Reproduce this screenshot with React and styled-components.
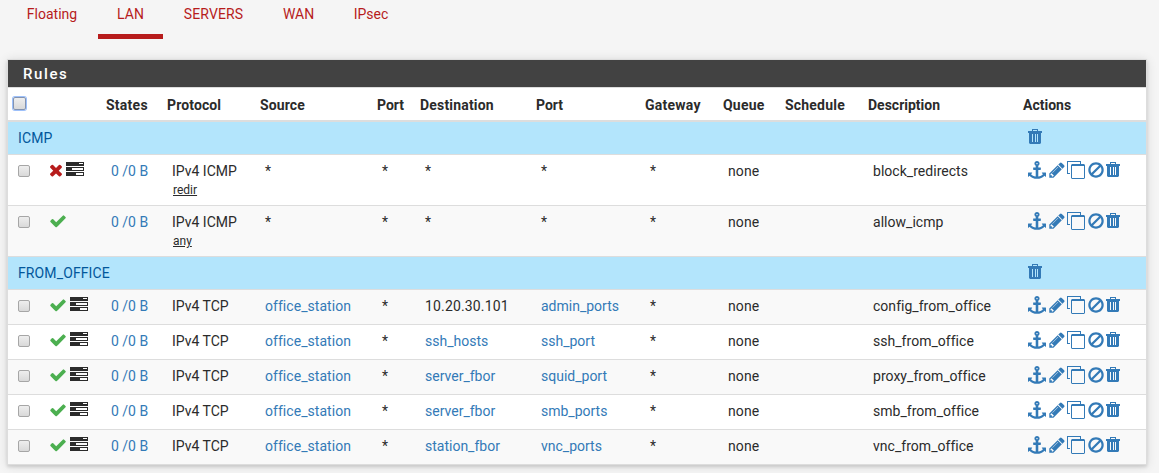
import React from "react";
import styled, { createGlobalStyle, css } from "styled-components";

const Global = createGlobalStyle`
  *, *::before, *::after { box-sizing: border-box; }
  body {
    margin: 0;
    background: #f5f5f5;
    color: #2b2b2b;
    font: 14px/20px Roboto, "Liberation Sans", sans-serif;
    overflow: hidden;
  }
`;

const Page = styled.main`
  height: 473px;
  padding: 0 12px 0 7px;
  overflow: hidden;
`;

const Tabs = styled.nav`
  display: flex;
  height: 39px;
  margin: 0 0 20px -1px;
`;

const Tab = styled.a`
  width: ${(p) => p.$width}px;
  padding-top: 4px;
  text-align: center;
  color: #b71c1c;
  border-bottom: 5px solid ${(p) => (p.$active ? "#b71c1c" : "transparent")};
  letter-spacing: ${(p) => p.$spacing || 0}px;
`;

const Panel = styled.section`
  border: 1px solid #ddd;
  border-bottom: 0;
  background: #fff;
  box-shadow: 0 1px 10px rgba(0, 0, 0, 0.12), 0 2px 3px rgba(0, 0, 0, 0.12);
`;

const PanelTitle = styled.h2`
  height: 28px;
  margin: 0;
  padding: 4px 15px 0;
  border-bottom: 1px solid #ddd;
  background: #424242;
  background-clip: padding-box;
  color: #fff;
  font-size: 15px;
  font-weight: 500;
  line-height: 20px;
  letter-spacing: 1.6px;
`;

const Table = styled.table`
  width: 1138px;
  table-layout: fixed;
  border-collapse: separate;
  border-spacing: 0;
`;

const Th = styled.th`
  height: 34px;
  padding: 1px 0 0 5px;
  border-bottom: 2px solid #ddd;
  text-align: left;
  vertical-align: middle;
  white-space: nowrap;
  font-weight: 700;
  letter-spacing: ${(p) => p.$spacing || 0}px;
`;

const cell = css`
  padding: 6px 0 0 10px;
  vertical-align: top;
  white-space: nowrap;
`;

const Td = styled.td`
  ${cell}
  height: ${(p) => (p.$tall ? 51 : 35)}px;
  border-bottom: 1px solid #ddd;
  background: ${(p) => (p.$shade ? "#f9f9f9" : "#fff")};
  color: ${(p) => (p.$link ? "#337ab7" : "inherit")};
  letter-spacing: ${(p) => p.$spacing || 0}px;
`;

const GroupTd = styled.td`
  ${cell}
  height: 33px;
  border-bottom: 1px solid #ddd;
  background: #b3e5fc;
  color: #01579b;
  letter-spacing: 0.12px;
`;

const Small = styled.span`
  display: block;
  margin: 0 0 0 1px;
  font-size: 12px;
  line-height: 18px;
  text-decoration: underline;
`;

const Check = styled.input.attrs({ type: "checkbox" })`
  appearance: none;
  display: block;
  width: 12px;
  height: 12px;
  margin: ${(p) => (p.$focus ? "-3px 0 0" : "4px 0 0")};
  border: 1px solid #a6a6a6;
  border-radius: 2px;
  background: linear-gradient(#eee, #d9d9d9);
  ${(p) => p.$focus && css`
    width: 13px;
    height: 13px;
    border-color: #8393b0;
    box-shadow: 0 0 0 1px #9dc0fa;
  `}
`;

const IconRow = styled.div`
  display: flex;
  height: 18px;
`;

const Glyph = styled.svg`
  flex: none;
  display: block;
  width: 18px;
  height: 18px;
  margin-left: ${(p) => p.$gap || 0}px;
  color: ${(p) => p.$tone || "#337ab7"};
  fill: currentColor;
`;

const PATHS = {
  check:
    "M1671 566q0 40-28 68l-724 724-136 136q-28 28-68 28t-68-28l-136-136-362-362q-28-28-28-68t28-68l136-136q28-28 68-28t68 28l294 295 656-657q28-28 68-28t68 28l136 136q28 28 28 68z",
  times:
    "M1490 1322q0 40-28 68l-136 136q-28 28-68 28t-68-28l-294-294-294 294q-28 28-68 28t-68-28l-136-136q-28-28-28-68t28-68l294-294-294-294q-28-28-28-68t28-68l136-136q28-28 68-28t68 28l294 294 294-294q28-28 68-28t68 28l136 136q28 28 28 68t-28 68l-294 294 294 294q28 28 28 68z",
  anchor:
    "M960 256q0-26-19-45t-45-19-45 19-19 45 19 45 45 19 45-19 19-45zm832 928v352q0 22-20 30-8 2-12 2-12 0-23-9l-93-93q-119 143-318.500 226.500t-429.500 83.500-429.500-83.500-318.500-226.500l-93 93q-9 9-23 9-4 0-12-2-20-8-20-30v-352q0-14 9-23t23-9h352q22 0 30 20 8 19-7 35l-100 100q67 91 189.500 153.500t271.500 82.500v-647h-192q-26 0-45-19t-19-45v-128q0-26 19-45t45-19h192v-163q-58-34-93-92.500t-35-128.500q0-106 75-181t181-75 181 75 75 181q0 70-35 128.500t-93 92.500v163h192q26 0 45 19t19 45v128q0 26-19 45t-45 19h-192v647q149-20 271.500-82.500t189.500-153.500l-100-100q-15-16-7-35 8-20 30-20h352q14 0 23 9t9 23z",
  pencil:
    "M491 1536l91-91-235-235-91 91v107h128v128h107zm523-928q0-22-22-22-10 0-17 7l-542 542q-7 7-7 17 0 22 22 22 10 0 17-7l542-542q7-7 7-17zm-54-192l416 416-832 832h-416v-416zm683 96q0 53-37 90l-166 166-416-416 166-165q36-38 90-38 53 0 91 38l235 234q37 39 37 91z",
  ban:
    "M1440 893q0-161-87-295l-754 753q137 89 297 89 111 0 211.500-43.500t173.500-116.500 116-174.500 43-212.500zm-999 299l755-754q-135-91-300-91-148 0-273 73t-198 199-73 274q0 162 89 299zm1223-299q0 157-61 300t-163.500 246-245 164-298.500 61-298.500-61-245-164-163.500-246-61-300 61-299.500 163.500-245.500 245-164 298.500-61 298.500 61 245 164 163.500 245.500 61 299.500z",
};

const Icon = ({ name, ...rest }) => (
  <Glyph viewBox="0 0 1792 1792" {...rest}>
    <path d={PATHS[name]} />
  </Glyph>
);

const TasksIcon = (props) => (
  <Glyph viewBox="0 0 18 18" shapeRendering="crispEdges" {...props}>
    <path
      fillRule="evenodd"
      d="M0 1h18v4H0zM13 2h4v1h-4zM0 6h18v4H0zM6 7h11v2H6zM0 11h18v4H0zM10 12h7v2h-7z"
    />
  </Glyph>
);

const CloneIcon = (props) => (
  <Glyph viewBox="0 0 18 18" {...props}>
    <path d="M0 0h14v3h-1V1H1v11h2v1H1V13H0z" />
    <path fillRule="evenodd" d="M5 3h12l1 1v13l-1 1H5l-1-1V4zM5 5v12h12V5z" />
  </Glyph>
);

const TrashIcon = (props) => (
  <Glyph viewBox="0 0 18 18" {...props}>
    <path
      fillRule="evenodd"
      d="M6 1h6v2h4v2h-1v10l-1 1H4l-1-1V5H2V3h4zM7 2v1h4V2zM6 6v8h1V6zM9 6v8h1V6zM11 6v8h1V6z"
    />
  </Glyph>
);

const COLUMNS = [
  ["", 32], ["", 61], ["States", 61, 0.25], ["Protocol", 93, 0.12], ["Source", 117, 0.1],
  ["Port", 43], ["Destination", 116, 0.18], ["Port", 109], ["Gateway", 78, 0.25],
  ["Queue", 62, 0.2], ["Schedule", 83, 0.2], ["Description", 155], ["Actions", 128],
];

const tcp = (dest, port, description, extra) => ({
  protocol: "IPv4 TCP", source: "office_station", dest, port, description,
  tasks: true, destLink: true, ...extra,
});

const GROUPS = [
  {
    name: "ICMP",
    rules: [
      { protocol: "IPv4 ICMP", kind: "redir", description: "block_redirects", block: true, tasks: true },
      { protocol: "IPv4 ICMP", kind: "any", description: "allow_icmp", shade: true },
    ],
  },
  {
    name: "FROM_OFFICE",
    rules: [
      tcp("10.20.30.101", "admin_ports", "config_from_office", { destLink: false, shade: true }),
      tcp("ssh_hosts", "ssh_port", "ssh_from_office"),
      tcp("server_fbor", "squid_port", "proxy_from_office", { shade: true }),
      tcp("server_fbor", "smb_ports", "smb_from_office"),
      tcp("station_fbor", "vnc_ports", "vnc_from_office", { shade: true }),
    ],
  },
];

function Rule({ rule }) {
  const base = { $tall: !!rule.kind, $shade: rule.shade };
  return (
    <tr>
      <Td {...base}><Check /></Td>
      <Td {...base}>
        <IconRow>
          {rule.block ? (
            <Icon name="times" $gap={-3} $tone="#b71c1c" />
          ) : (
            <Icon name="check" $gap={-1} $tone="#4caf50" />
          )}
          {rule.tasks && <TasksIcon $gap={rule.block ? 1 : 3} $tone="#2b2b2b" />}
        </IconRow>
      </Td>
      <Td {...base} $link>0 /0 B</Td>
      <Td {...base}>
        {rule.protocol}
        {rule.kind && <Small>{rule.kind}</Small>}
      </Td>
      <Td {...base} $link={!!rule.source} $spacing={0.05}>{rule.source || "*"}</Td>
      <Td {...base}>*</Td>
      <Td {...base} $link={rule.destLink} $spacing={rule.dest && !rule.destLink ? 0.15 : 0}>
        {rule.dest || "*"}
      </Td>
      <Td {...base} $link={!!rule.port}>{rule.port || "*"}</Td>
      <Td {...base}>*</Td>
      <Td {...base} $spacing={0.1}>none</Td>
      <Td {...base} />
      <Td {...base} $spacing={0.03}>{rule.description}</Td>
      <Td {...base}>
        <IconRow>
          <Icon name="anchor" />
          <Icon name="pencil" $gap={2} />
          <CloneIcon $gap={1} />
          <Icon name="ban" $gap={2} />
          <TrashIcon $gap={-1} />
        </IconRow>
      </Td>
    </tr>
  );
}

export default function App() {
  return (
    <>
      <Global />
      <Page>
        <Tabs>
          <Tab $width={92}>Floating</Tab>
          <Tab $width={65} $active>LAN</Tab>
          <Tab $width={101} $spacing={0.1}>SERVERS</Tab>
          <Tab $width={69}>WAN</Tab>
          <Tab $width={76}>IPsec</Tab>
        </Tabs>
        <Panel>
          <PanelTitle>Rules</PanelTitle>
          <Table>
            <colgroup>
              {COLUMNS.map(([, width], i) => <col key={i} width={width} />)}
            </colgroup>
            <thead>
              <tr>
                {COLUMNS.map(([label, , spacing], i) => (
                  <Th key={i} $spacing={spacing}>{i === 0 ? <Check $focus /> : label}</Th>
                ))}
              </tr>
            </thead>
            <tbody>
              {GROUPS.map((group) => (
                <React.Fragment key={group.name}>
                  <tr>
                    <GroupTd colSpan={12}>{group.name}</GroupTd>
                    <GroupTd><IconRow><TrashIcon $gap={-2} /></IconRow></GroupTd>
                  </tr>
                  {group.rules.map((rule) => <Rule key={rule.description} rule={rule} />)}
                </React.Fragment>
              ))}
            </tbody>
          </Table>
        </Panel>
      </Page>
    </>
  );
}
